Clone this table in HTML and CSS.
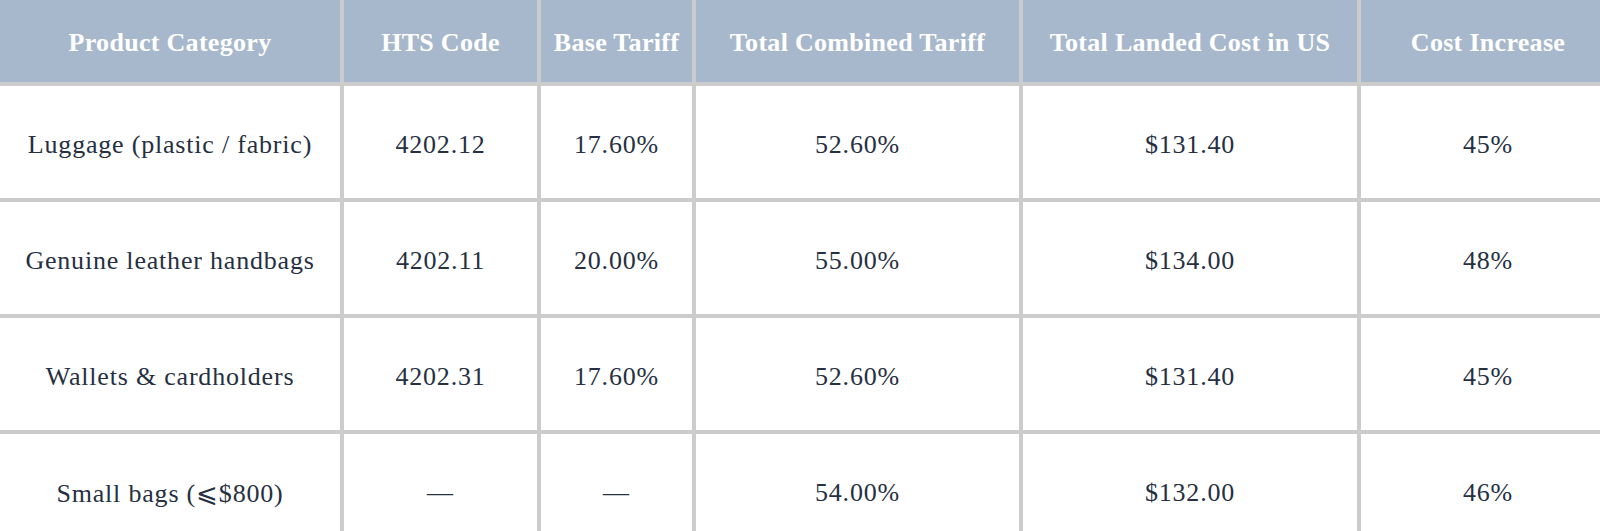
FILE: index.html
```html
<!DOCTYPE html>
<html lang="en">
<head>
<meta charset="utf-8">
<title>Tariff table</title>
<link rel="stylesheet" href="styles.css">
</head>
<body>
<table class="tariff">
  <colgroup>
    <col class="c1"><col class="c2"><col class="c3"><col class="c4"><col class="c5"><col class="c6">
  </colgroup>
  <thead>
    <tr>
      <th>Product Category</th>
      <th>HTS Code</th>
      <th>Base Tariff</th>
      <th>Total Combined Tariff</th>
      <th>Total Landed Cost in US</th>
      <th>Cost Increase</th>
    </tr>
  </thead>
  <tbody>
    <tr>
      <td>Luggage (plastic / fabric)</td>
      <td>4202.12</td>
      <td>17.60%</td>
      <td>52.60%</td>
      <td>$131.40</td>
      <td>45%</td>
    </tr>
    <tr>
      <td>Genuine leather handbags</td>
      <td>4202.11</td>
      <td>20.00%</td>
      <td>55.00%</td>
      <td>$134.00</td>
      <td>48%</td>
    </tr>
    <tr>
      <td>Wallets &amp; cardholders</td>
      <td>4202.31</td>
      <td>17.60%</td>
      <td>52.60%</td>
      <td>$131.40</td>
      <td>45%</td>
    </tr>
    <tr>
      <td>Small bags (⩽$800)</td>
      <td>—</td>
      <td>—</td>
      <td>54.00%</td>
      <td>$132.00</td>
      <td>46%</td>
    </tr>
  </tbody>
</table>
</body>
</html>
```

FILE: styles.css
```css
html, body {
  margin: 0;
  padding: 0;
  background: #ffffff;
  overflow: hidden;
  width: 1600px;
  height: 531px;
}

.tariff {
  border-collapse: separate;
  border-spacing: 0;
  table-layout: fixed;
  width: 1619px;
  font-family: "Liberation Serif", "Times New Roman", serif;
}

.c1 { width: 344px; }
.c2 { width: 197px; }
.c3 { width: 155px; }
.c4 { width: 327px; }
.c5 { width: 338px; }
.c6 { width: 258px; }

.tariff th,
.tariff td {
  box-sizing: border-box;
  border-right: 4px solid #cccccc;
  border-bottom: 4px solid #cccccc;
  text-align: center;
  vertical-align: middle;
  padding: 0;
  white-space: nowrap;
}

.tariff th {
  background: #a8b8cc;
  color: #ffffff;
  font-weight: bold;
  font-size: 26px;
  letter-spacing: 0.3px;
  height: 86px;
  padding-top: 4px;
}

.tariff td {
  color: #263042;
  font-size: 26px;
  letter-spacing: 0.8px;
  height: 116px;
  padding-top: 6px;
}
```
